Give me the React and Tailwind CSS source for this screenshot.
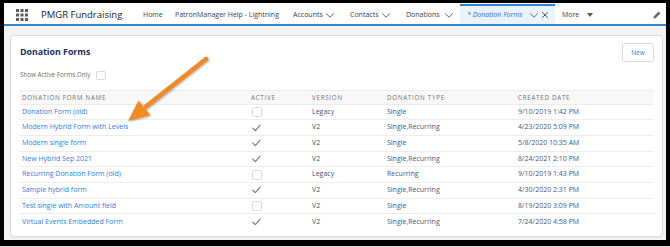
import React from 'react';

const FORMS = [
  { name: 'Donation Form (old)', active: false, version: 'Legacy', type: 'Single', created: '9/10/2019 1:42 PM' },
  { name: 'Modern Hybrid Form with Levels', active: true, version: 'V2', type: 'Single,Recurring', created: '4/23/2020 5:09 PM' },
  { name: 'Modern single form', active: true, version: 'V2', type: 'Single', created: '5/8/2020 10:35 AM' },
  { name: 'New Hybrid Sep 2021', active: true, version: 'V2', type: 'Single,Recurring', created: '8/24/2021 2:10 PM' },
  { name: 'Recurring Donation Form (old)', active: false, version: 'Legacy', type: 'Recurring', created: '9/10/2019 1:43 PM' },
  { name: 'Sample hybrid form', active: true, version: 'V2', type: 'Single,Recurring', created: '4/30/2020 2:31 PM' },
  { name: 'Test single with Amount field', active: false, version: 'V2', type: 'Single', created: '8/19/2020 3:09 PM' },
  { name: 'Virtual Events Embedded Form', active: true, version: 'V2', type: 'Single,Recurring', created: '7/24/2020 4:58 PM' },
];

const COLS = 'grid grid-cols-[229px_61px_75px_131px_1fr] pl-[3px]';

export default function App() {
  return (
    <div className="relative h-[247px] w-[670px] bg-[#d9d9d9] font-['Open_Sans',sans-serif]">
      <div className="flex h-[246px] flex-col border-x-4 border-t-[3px] border-b-[6px] border-black bg-[#f3f3f3]">
        <NavBar />

        <div className="mt-[9px] ml-[6px] mr-[3px] flex h-[202px] flex-col rounded-[4px] border border-[#dddbda] bg-white px-[8px] shadow-[0_1px_1px_rgba(0,0,0,0.06)]">
          <div className="mt-[7px] flex h-[19px] items-center justify-between">
            <h1 className="pl-[1px] text-[8.8px] font-bold text-[#16325c]">Donation Forms</h1>
            <button className="h-[19px] w-[32px] rounded-[3px] border border-[#dddbda] bg-white text-[6.5px] text-[#2f7ed8]">New</button>
          </div>

          <div className="mt-[8px] flex h-[10px] items-center gap-[6px] pl-[1px]">
            <span className="text-[6.3px] text-[#706e6b]">Show Active Forms Only</span>
            <span className="h-[9px] w-[10px] rounded-[2px] border border-[#d8d8d8] bg-white" />
          </div>

          <div className="mt-[10px]">
            <div className={`${COLS} h-[14.5px] items-center border-y border-[#ebebeb] bg-[#f8f8f8] text-[6.2px] tracking-[0.75px] text-[#6f6f6f] uppercase`}>
              <span>Donation Form Name</span>
              <span>Active</span>
              <span>Version</span>
              <span>Donation Type</span>
              <span>Created Date</span>
            </div>
            {FORMS.map((f, i) => (
              <div
                key={f.name}
                className={`${COLS} h-[15.7px] items-center text-[7px] text-[#44587c] ${i < FORMS.length - 1 ? 'border-b border-[#ededed]' : ''}`}
              >
                <span className="text-[#2f7ed8]">{f.name}</span>
                <span className="flex items-center pl-[1px]">
                  {f.active ? <CheckIcon className="h-[8px] w-[9px] text-[#777]" /> : <span className="h-[10px] w-[10px] rounded-[2px] border border-[#dcdcdc]" />}
                </span>
                <span className="text-[#4a5268]">{f.version}</span>
                <span>{f.type}</span>
                <span>{f.created}</span>
              </div>
            ))}
          </div>
        </div>
      </div>

      {/* callout arrow pointing at the hybrid form row */}
      <svg className="pointer-events-none absolute inset-0 drop-shadow-[1px_1px_1px_rgba(0,0,0,0.3)]" width="670" height="247" viewBox="0 0 670 247">
        <line x1="206" y1="59" x2="146" y2="106.5" stroke="#f28a24" strokeWidth="4.5" strokeLinecap="round" />
        <polygon points="128,121 138.5,100.5 150.3,115.3" fill="#f28a24" />
      </svg>
    </div>
  );
}

function NavBar() {
  return (
    <nav className="flex h-[23px] shrink-0 items-stretch border-b-2 border-[#2b87d3] bg-white text-[7px] text-[#3e3e3c]">
      <div className="flex w-[24px] items-center pt-[3px] pl-[12px]">
        <GridIcon className="h-[12px] w-[12px] text-[#5a5a5a]" />
      </div>
      <div className="flex w-[115px] items-center pt-[3px] pl-[13px] text-[9.5px] text-[#222]">PMGR Fundraising</div>
      <div className="flex w-[32px] items-center pt-[3px]">Home</div>
      <div className="flex w-[118px] items-center pt-[3px]">PatronManager Help - Lightning</div>
      <div className="flex w-[33px] items-center pt-[3px]">Accounts</div>
      <div className="flex w-[24px] items-center pt-[3px]">
        <ChevronIcon className="h-[5px] w-[8px] text-[#666]" />
      </div>
      <div className="flex w-[32px] items-center pt-[3px]">Contacts</div>
      <div className="flex w-[24px] items-center pt-[3px]">
        <ChevronIcon className="h-[5px] w-[8px] text-[#666]" />
      </div>
      <div className="flex w-[39px] items-center pt-[3px]">Donations</div>
      <div className="flex w-[15px] items-center pt-[3px]">
        <ChevronIcon className="h-[5px] w-[8px] text-[#666]" />
      </div>
      <div className="mt-[1px] flex w-[95px] items-center border-t-2 border-[#2b87d3] bg-[#eaf3fc] pl-[7px]">
        <span className="w-[63px] text-[#2f6fc0] italic">* Donation Forms</span>
        <ChevronIcon className="h-[5px] w-[8px] text-[#666]" />
        <XIcon className="ml-[4px] h-[6px] w-[6px] text-[#555]" />
      </div>
      <div className="box-content flex w-[25px] items-center pt-[3px] pl-[7px]">More</div>
      <div className="flex items-center pt-[3px]">
        <TriangleIcon className="h-[4px] w-[6px] text-[#555]" />
      </div>
      <div className="ml-auto flex items-center pt-[3px] pr-[5px]">
        <PencilIcon className="h-[8px] w-[8px] text-[#666]" />
      </div>
    </nav>
  );
}

function GridIcon(props) {
  const dots = [];
  for (let r = 0; r < 3; r++) for (let c = 0; c < 3; c++) dots.push(<rect key={`${r}-${c}`} x={c * 4.5} y={r * 4.5} width="3" height="3" />);
  return (
    <svg viewBox="0 0 12 12" fill="currentColor" {...props}>
      {dots}
    </svg>
  );
}

function ChevronIcon(props) {
  return (
    <svg viewBox="0 0 8 5" fill="none" stroke="currentColor" strokeWidth="1" {...props}>
      <path d="M0.5 0.8 4 4.2 7.5 0.8" strokeLinecap="round" strokeLinejoin="round" />
    </svg>
  );
}

function XIcon(props) {
  return (
    <svg viewBox="0 0 6 6" fill="none" stroke="currentColor" strokeWidth="1" {...props}>
      <path d="M0.5 0.5 5.5 5.5M5.5 0.5 0.5 5.5" strokeLinecap="round" />
    </svg>
  );
}

function TriangleIcon(props) {
  return (
    <svg viewBox="0 0 6 4" fill="currentColor" {...props}>
      <path d="M0 0h6L3 4z" />
    </svg>
  );
}

function PencilIcon(props) {
  return (
    <svg viewBox="0 0 8 8" fill="currentColor" {...props}>
      <path d="M5.6 0.6 7.4 2.4 2.6 7.2 0.4 7.6 0.8 5.4z" />
    </svg>
  );
}

function CheckIcon(props) {
  return (
    <svg viewBox="0 0 9 8" fill="none" stroke="currentColor" strokeWidth="1.1" {...props}>
      <path d="M0.8 4.2 3.3 6.6 8.2 1.2" strokeLinecap="round" strokeLinejoin="round" />
    </svg>
  );
}
